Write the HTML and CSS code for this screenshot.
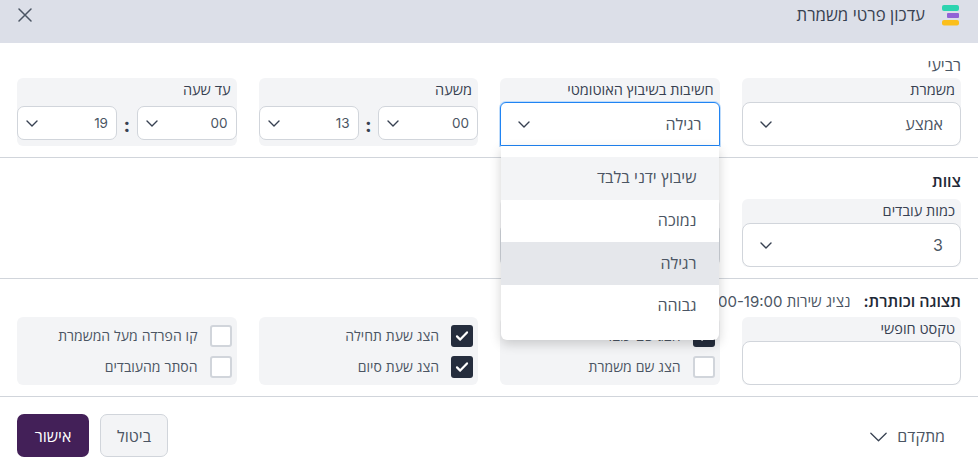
FILE: index.html
```html
<!DOCTYPE html>
<html lang="he" dir="rtl">
<head>
    <meta charset="UTF-8">
    <meta name="viewport" content="width=device-width, initial-scale=1.0">
    <title>עדכון פרטי משמרת</title>
    <link rel="stylesheet" href="styles.css">
</head>
<body>
    <svg class="defs" width="0" height="0">
        <symbol id="chevron" viewBox="0 0 12 7">
            <path d="M1 1l5 5 5-5" fill="none" stroke="currentColor" stroke-width="1.4" stroke-linecap="round" stroke-linejoin="round"/>
        </symbol>
        <symbol id="chevron-thin" viewBox="0 0 12 7">
            <path d="M.6.8 6 6.2 11.4.8" fill="none" stroke="currentColor" stroke-width=".9" stroke-linecap="round" stroke-linejoin="round"/>
        </symbol>
        <symbol id="check" viewBox="0 0 14 12">
            <path d="M2 6.4 5.2 9.6 12 2.4" fill="none" stroke="currentColor" stroke-width="2.2" stroke-linecap="round" stroke-linejoin="round"/>
        </symbol>
    </svg>

    <header class="header">
        <div class="header-title">
            <svg class="logo" viewBox="0 0 18 21" width="18" height="21">
                <rect x="1" y="0" width="17" height="6" rx="2" fill="#2dd4b0"/>
                <rect x="6" y="8" width="12" height="5" rx="1" fill="#9163d6"/>
                <rect x="1" y="15" width="17" height="5.5" rx="2" fill="#fbbf1c"/>
            </svg>
            <h2>עדכון פרטי משמרת</h2>
        </div>
        <button class="close" aria-label="סגור">
            <svg viewBox="0 0 14 14" width="14" height="14">
                <path d="M1 1l12 12M13 1 1 13" fill="none" stroke="currentColor" stroke-width="1.5" stroke-linecap="round"/>
            </svg>
        </button>
    </header>

    <section class="section section-first">
        <div class="section-title plain">רביעי</div>
        <div class="row">
            <div class="field">
                <label>משמרת</label>
                <div class="select"><span>אמצע</span><svg class="chev"><use href="#chevron"/></svg></div>
            </div>
            <div class="field field-open">
                <label>חשיבות בשיבוץ האוטומטי</label>
                <div class="select select-focus"><span>רגילה</span><svg class="chev"><use href="#chevron"/></svg></div>
                <ul class="menu">
                    <li class="hover">שיבוץ ידני בלבד</li>
                    <li>נמוכה</li>
                    <li class="selected">רגילה</li>
                    <li>גבוהה</li>
                </ul>
            </div>
            <div class="field">
                <label>משעה</label>
                <div class="time">
                    <div class="select select-small"><span>00</span><svg class="chev"><use href="#chevron"/></svg></div>
                    <b class="colon">:</b>
                    <div class="select select-small"><span>13</span><svg class="chev"><use href="#chevron"/></svg></div>
                </div>
            </div>
            <div class="field">
                <label>עד שעה</label>
                <div class="time">
                    <div class="select select-small"><span>00</span><svg class="chev"><use href="#chevron"/></svg></div>
                    <b class="colon">:</b>
                    <div class="select select-small"><span>19</span><svg class="chev"><use href="#chevron"/></svg></div>
                </div>
            </div>
        </div>
    </section>

    <section class="section">
        <div class="section-title">צוות</div>
        <div class="row">
            <div class="field">
                <label>כמות עובדים</label>
                <div class="select"><span>3</span><svg class="chev"><use href="#chevron"/></svg></div>
            </div>
            <div class="field">
                <label></label>
                <div class="select"><span></span><svg class="chev"><use href="#chevron"/></svg></div>
            </div>
        </div>
    </section>

    <section class="section section-last">
        <div class="section-title title-inline">תצוגה וכותרת: <span>נציג שירות 13:00-19:00</span></div>
        <div class="row">
            <div class="field">
                <label>טקסט חופשי</label>
                <input class="text-input" type="text">
            </div>
            <div class="checks">
                <div class="check-row"><i class="box on"><svg><use href="#check"/></svg></i>הצג שם עובד</div>
                <div class="check-row"><i class="box"></i>הצג שם משמרת</div>
            </div>
            <div class="checks">
                <div class="check-row"><i class="box on"><svg><use href="#check"/></svg></i>הצג שעת תחילה</div>
                <div class="check-row"><i class="box on"><svg><use href="#check"/></svg></i>הצג שעת סיום</div>
            </div>
            <div class="checks">
                <div class="check-row"><i class="box"></i>קו הפרדה מעל המשמרת</div>
                <div class="check-row"><i class="box"></i>הסתר מהעובדים</div>
            </div>
        </div>
    </section>

    <footer class="footer">
        <div class="advanced">מתקדם <svg class="chev-big"><use href="#chevron-thin"/></svg></div>
        <div class="buttons">
            <button class="btn btn-cancel">ביטול</button>
            <button class="btn btn-ok">אישור</button>
        </div>
    </footer>
</body>
</html>
```

FILE: styles.css
```css
* {
    box-sizing: border-box;
}
body {
    margin: 0;
    overflow: hidden;
    background-color: #fff;
    color: #374151;
    font-family: Inter, "Open Sans", sans-serif;
    font-size: 16px;
}
.defs {
    position: absolute;
}
.header {
    display: flex;
    justify-content: space-between;
    align-items: flex-start;
    height: 43px;
    padding: 5px 19px 0 18px;
    background-color: #dcdfe8;
}
.header-title {
    display: flex;
    align-items: flex-start;
    gap: 16px;
}
.header-title h2 {
    margin: 0;
    font-size: 16.8px;
    font-weight: 500;
    line-height: 20px;
    color: #374151;
}
.close {
    padding: 0;
    margin-top: 3px;
    border: 0;
    background: none;
    color: #4b5563;
    line-height: 0;
}
.section {
    padding: 13px 17px 11px;
    border-bottom: 1px solid #d1d5db;
}
.section-first {
    padding-top: 12px;
}
.section-last {
    padding-top: 12px;
}
.section-title {
    margin-bottom: 8px;
    font-size: 16px;
    font-weight: 600;
    line-height: 20px;
    white-space: nowrap;
    color: #1f2937;
}
.section-title.plain {
    margin-bottom: 3px;
    font-size: 16px;
    font-weight: 400;
    color: #4b5563;
}
.title-inline {
    height: 20px;
    margin-bottom: 6px;
}
.title-inline span {
    margin-right: 9px;
    font-size: 15px;
    font-weight: 400;
    color: #4b5563;
}
.row {
    display: grid;
    grid-template-columns: repeat(4, 1fr);
    gap: 22px;
}
.field {
    position: relative;
    height: 68px;
    border-radius: 6px;
    background-color: #f3f4f6;
}
.field label {
    display: block;
    height: 24px;
    padding: 3px 6px 0;
    font-size: 14.5px;
    font-weight: 500;
    line-height: 18px;
    color: #374151;
}
.select {
    display: flex;
    justify-content: space-between;
    align-items: center;
    height: 44px;
    padding: 0 17px;
    border: 1px solid #d1d5db;
    border-radius: 8px;
    background-color: #fff;
    color: #4b5563;
}
.select-focus {
    border-color: #2084f3;
    border-radius: 6px 6px 0 0;
    box-shadow: 0 0 0 1px #bfdcfb;
}
.select-small {
    width: 100px;
    height: 34px;
    padding: 0 8px;
    border-radius: 7px;
    font-size: 13.5px;
}
.chev {
    width: 12px;
    height: 7px;
    color: #374151;
}
.time {
    display: flex;
    justify-content: space-between;
    align-items: center;
    height: 44px;
    padding-bottom: 2px;
}
.colon {
    padding-top: 3px;
    font-size: 20px;
    font-weight: 700;
    line-height: 20px;
    color: #374151;
}
.text-input {
    display: block;
    width: 100%;
    height: 44px;
    border: 1px solid #d1d5db;
    border-radius: 8px;
    background-color: #fff;
}
.checks {
    display: flex;
    flex-direction: column;
    justify-content: center;
    gap: 9px;
    height: 68px;
    padding: 0 5px;
    border-radius: 6px;
    background-color: #f3f4f6;
}
.check-row {
    display: flex;
    align-items: center;
    gap: 12px;
    font-size: 14px;
    color: #4b5563;
}
.box {
    display: flex;
    justify-content: center;
    align-items: center;
    width: 22px;
    height: 22px;
    border: 2px solid #d1d5db;
    border-radius: 3px;
    background-color: #fff;
}
.box.on {
    border: 0;
    background-color: #252d3d;
    color: #fff;
}
.box svg {
    width: 14px;
    height: 12px;
}
.menu {
    position: absolute;
    z-index: 10;
    top: 68px;
    left: 1px;
    right: 1px;
    margin: 0;
    padding: 11px 0 12px;
    list-style: none;
    border-radius: 0 0 6px 6px;
    background-color: #fff;
    box-shadow: 0 4px 12px rgba(0, 0, 0, 0.18);
}
.menu li {
    display: flex;
    align-items: center;
    height: 42.67px;
    padding: 0 22px 2px;
    color: #4b5563;
}
.menu .hover {
    background-color: #f3f4f6;
}
.menu .selected {
    background-color: #e5e7eb;
}
.footer {
    display: flex;
    justify-content: space-between;
    align-items: center;
    padding: 17px 17px 0 17px;
}
.advanced {
    display: flex;
    align-items: center;
    gap: 10px;
    padding-right: 16px;
    color: #4b5563;
}
.chev-big {
    width: 17px;
    height: 10px;
    margin-top: 3px;
    color: #374151;
}
.buttons {
    display: flex;
    flex-direction: row;
    gap: 11px;
}
.btn {
    height: 43px;
    border-radius: 7px;
    font-family: inherit;
    font-size: 16px;
}
.btn-cancel {
    width: 68px;
    border: 1px solid #d1d5db;
    background-color: #f3f4f6;
    color: #4b5563;
}
.btn-ok {
    width: 72px;
    border: 0;
    background-color: #432058;
    color: #fff;
}
```
